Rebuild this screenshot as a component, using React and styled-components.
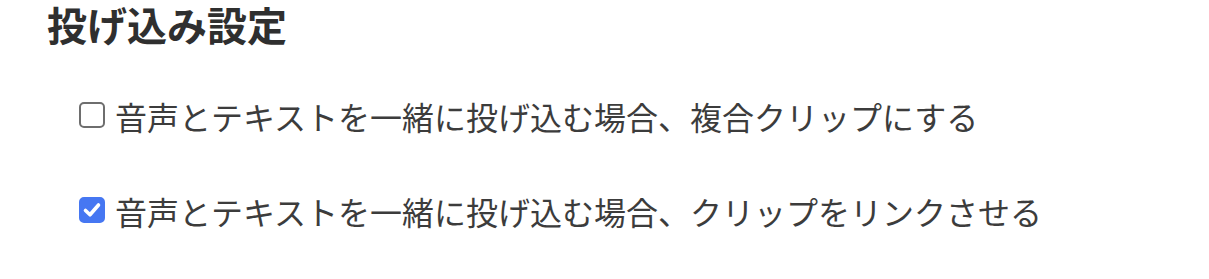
import styled, { createGlobalStyle } from 'styled-components';

const Global = createGlobalStyle`
  html, body {
    margin: 0;
    padding: 0;
    background: #fff;
  }
  body {
    font-family: "Noto Sans CJK JP", "Noto Sans", sans-serif;
    color: #333;
  }
`;

const Section = styled.section`
  padding: 0 0 0 47px;
`;

const Title = styled.h2`
  margin: 0 0 48px;
  font-size: 40px;
  line-height: 48px;
  font-weight: 700;
  color: #2f2f2f;
`;

const Options = styled.div`
  display: flex;
  flex-direction: column;
  gap: 55px;
  padding-left: 32px;
`;

const Option = styled.label`
  display: flex;
  align-items: center;
  gap: 10px;
  font-size: 32px;
  line-height: 40px;
  color: #3c3c3c;
`;

// chrome-ish checkbox, drawn at 2x
const Box = styled.span`
  box-sizing: border-box;
  width: 26px;
  height: 26px;
  flex: none;
  display: flex;
  align-items: center;
  justify-content: center;
  margin-top: -2px;
  border-radius: 5px;
  border: 2px solid ${(p) => (p.checked ? '#4677f2' : '#6e6e6e')};
  background: ${(p) => (p.checked ? '#4677f2' : '#fff')};
`;

const Checkbox = ({ checked }) => (
  <Box checked={checked} role="checkbox" aria-checked={checked}>
    {checked && (
      <svg width="20" height="20" viewBox="0 0 20 20">
        <path d="M3.5 10.5 L8 14.8 L16.5 5" fill="none" stroke="#fff" strokeWidth="3.6" strokeLinecap="round" strokeLinejoin="round" />
      </svg>
    )}
  </Box>
);

const settings = [
  { label: '音声とテキストを一緒に投げ込む場合、複合クリップにする', checked: false },
  { label: '音声とテキストを一緒に投げ込む場合、クリップをリンクさせる', checked: true },
];

const App = () => (
  <>
    <Global />
    <Section>
      <Title>投げ込み設定</Title>
      <Options>
        {settings.map((s) => (
          <Option key={s.label}>
            <Checkbox checked={s.checked} />
            <span>{s.label}</span>
          </Option>
        ))}
      </Options>
    </Section>
  </>
);

export default App;
